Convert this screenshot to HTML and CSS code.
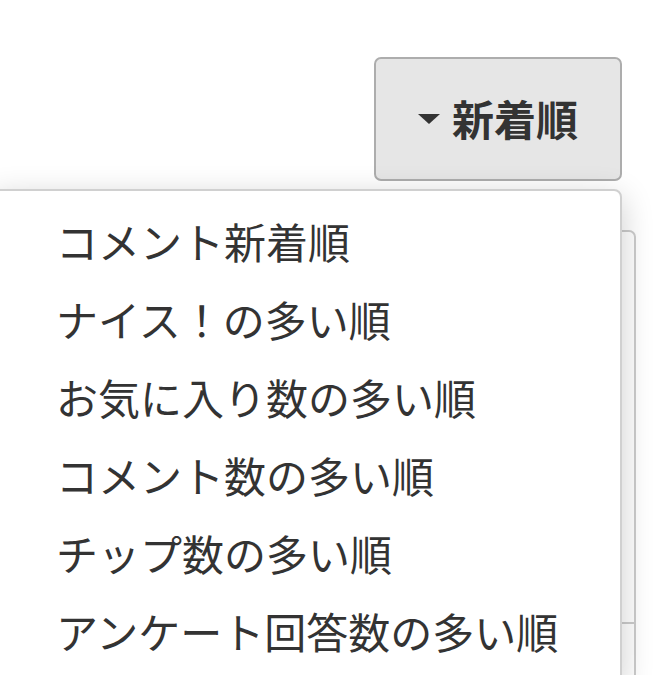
FILE: index.html
```html
<!DOCTYPE html>
<html lang="ja">
<head>
    <meta charset="UTF-8">
    <meta name="viewport" content="width=device-width, initial-scale=1.0">
    <title>並び替え</title>
    <link rel="stylesheet" href="styles.css">
</head>
<body>

    <div class="toolbar">
        <button type="button" class="sort-btn">
            <span class="caret"></span>新着順
        </button>
    </div>

    <div class="stage">
        <div class="card">
            <div class="card-row"></div>
            <div class="card-row"></div>
        </div>

        <ul class="sort-menu">
            <li><a href="#">コメント新着順</a></li>
            <li><a href="#">ナイス！の多い順</a></li>
            <li><a href="#">お気に入り数の多い順</a></li>
            <li><a href="#">コメント数の多い順</a></li>
            <li><a href="#">チップ数の多い順</a></li>
            <li><a href="#">アンケート回答数の多い順</a></li>
        </ul>
    </div>

</body>
</html>
```

FILE: styles.css
```css
body {
    margin: 0;
    height: 675px;
    overflow: hidden;
    background: #fff;
    color: #333;
    font-family: "Noto Sans CJK JP", "Noto Sans", sans-serif;
}

.toolbar {
    display: flex;
    justify-content: flex-end;
    padding: 57px 46px 0 0;
}

.sort-btn {
    display: flex;
    align-items: center;
    justify-content: center;
    gap: 12px;
    width: 248px;
    height: 124px;
    padding: 0 0 4px;
    font-family: inherit;
    font-size: 42px;
    font-weight: bold;
    color: #333;
    background-color: #e6e6e6;
    border: 2px solid #adadad;
    border-radius: 7px;
}

.caret {
    width: 0;
    height: 0;
    margin-top: 4px;
    border-top: 10px solid #333;
    border-left: 11px solid transparent;
    border-right: 11px solid transparent;
}

.stage {
    position: relative;
    padding-top: 49px;
}

.card {
    margin: 0 32px 0 -10px;
    height: 500px;
    background: #fff;
    border: 2px solid #ccc;
    border-radius: 7px;
}

.card-row {
    height: 390px;
    border-bottom: 2px solid #ccc;
}

.sort-menu {
    position: absolute;
    top: 8px;
    left: -10px;
    right: 46px;
    margin: 0;
    padding: 11px 0;
    list-style: none;
    background: #fff;
    border: 2px solid #d0d0d0;
    border-radius: 8px;
    box-shadow: 0 8px 32px rgba(0, 0, 0, 0.2);
}

.sort-menu a {
    display: block;
    padding-left: 64px;
    font-size: 42px;
    line-height: 78px;
    color: #333;
    text-decoration: none;
    white-space: nowrap;
}
```
